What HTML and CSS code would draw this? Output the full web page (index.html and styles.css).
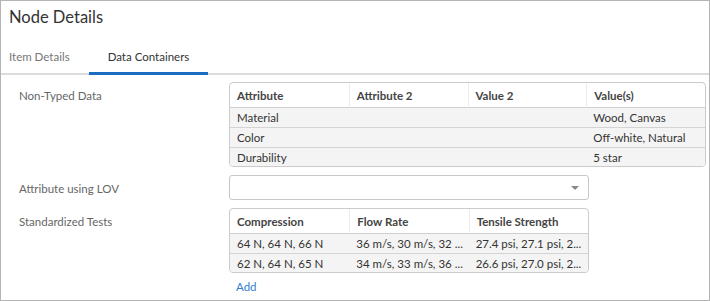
FILE: index.html
```html
<!DOCTYPE html>
<html lang="en">
<head>
    <meta charset="UTF-8">
    <title>Node Details</title>
    <link rel="stylesheet" href="styles.css">
</head>
<body>
    <div class="panel">
        <h1 class="title">Node Details</h1>

        <div class="tabs">
            <div class="tab">Item Details</div>
            <div class="tab active">Data Containers</div>
        </div>

        <div class="fields">
            <div class="field">
                <div class="label">Non-Typed Data</div>
                <div class="value wide">
                    <table class="grid">
                        <thead>
                            <tr><th>Attribute</th><th>Attribute 2</th><th>Value 2</th><th>Value(s)</th></tr>
                        </thead>
                        <tbody>
                            <tr><td>Material</td><td></td><td></td><td>Wood, Canvas</td></tr>
                            <tr><td>Color</td><td></td><td></td><td>Off-white, Natural</td></tr>
                            <tr><td>Durability</td><td></td><td></td><td>5 star</td></tr>
                        </tbody>
                    </table>
                </div>
            </div>

            <div class="field">
                <div class="label">Attribute using LOV</div>
                <div class="value">
                    <div class="select">
                        <span class="caret"></span>
                    </div>
                </div>
            </div>

            <div class="field">
                <div class="label">Standardized Tests</div>
                <div class="value">
                    <table class="grid">
                        <thead>
                            <tr><th>Compression</th><th>Flow Rate</th><th>Tensile Strength</th></tr>
                        </thead>
                        <tbody>
                            <tr><td>64 N, 64 N, 66 N</td><td>36 m/s, 30 m/s, 32 ...</td><td>27.4 psi, 27.1 psi, 2...</td></tr>
                            <tr><td>62 N, 64 N, 65 N</td><td>34 m/s, 33 m/s, 36 ...</td><td>26.6 psi, 27.0 psi, 2...</td></tr>
                        </tbody>
                    </table>
                    <a class="add-link" href="#">Add</a>
                </div>
            </div>
        </div>
    </div>
</body>
</html>
```

FILE: styles.css
```css
* {
    margin: 0;
    padding: 0;
    box-sizing: border-box;
}

body {
    font-family: Lato, 'Noto Sans', sans-serif;
    font-size: 11.5px;
    color: #333;
    background: #fff;
}

.panel {
    width: 710px;
    height: 301px;
    border: 1px solid #b4b4b4;
}

.title {
    font-size: 16.5px;
    font-weight: 400;
    line-height: 24px;
    color: #333;
    margin: 4px 0 12px;
    padding-left: 8px;
}

.tabs {
    display: flex;
    padding-left: 8px;
    border-bottom: 2px solid #dcdcdc;
}

.tab {
    padding: 8px 19px 7px;
    line-height: 16px;
    color: #777;
    border-bottom: 3px solid transparent;
    margin-bottom: -2px;
}

.tab:first-child {
    padding-left: 0;
}

.tab.active {
    color: #333;
    border-bottom-color: #1a6ec2;
}

.fields {
    padding: 7px 3px 0 18px;
    display: flex;
    flex-direction: column;
    gap: 8px;
}

.field {
    display: flex;
    align-items: flex-start;
}

.label {
    width: 210px;
    flex-shrink: 0;
    padding-top: 6px;
    line-height: 16px;
    color: #666;
}

.value {
    width: 360px;
}

.value.wide {
    flex: 1;
    width: auto;
}

.grid {
    width: 100%;
    table-layout: fixed;
    border-collapse: separate;
    border-spacing: 0;
    border: 1px solid #cbcbcb;
    border-radius: 4px;
    overflow: hidden;
}

.grid th {
    font-weight: 700;
    color: #444;
    text-align: left;
    height: 25px;
    padding: 0 7px;
    border-bottom: 1px solid #cfcfcf;
    border-left: 1px solid #ececec;
}

.grid th:first-child,
.grid td:first-child {
    border-left: none;
}

.grid td {
    height: 20px;
    padding: 0 7px;
    background: #f4f4f4;
    border-bottom: 1px solid #d4d4d4;
    white-space: nowrap;
}

.grid tbody tr:last-child td {
    border-bottom: none;
    height: 18px;
}

.select {
    position: relative;
    height: 25px;
    border: 1px solid #c8c8c8;
    border-radius: 3px;
    background: #fff;
}

.caret {
    position: absolute;
    right: 9px;
    top: 10px;
    border-left: 4px solid transparent;
    border-right: 4px solid transparent;
    border-top: 4px solid #888;
}

.add-link {
    display: inline-block;
    margin: 6px 0 0 7px;
    line-height: 16px;
    color: #2f80cf;
    text-decoration: none;
}
```
